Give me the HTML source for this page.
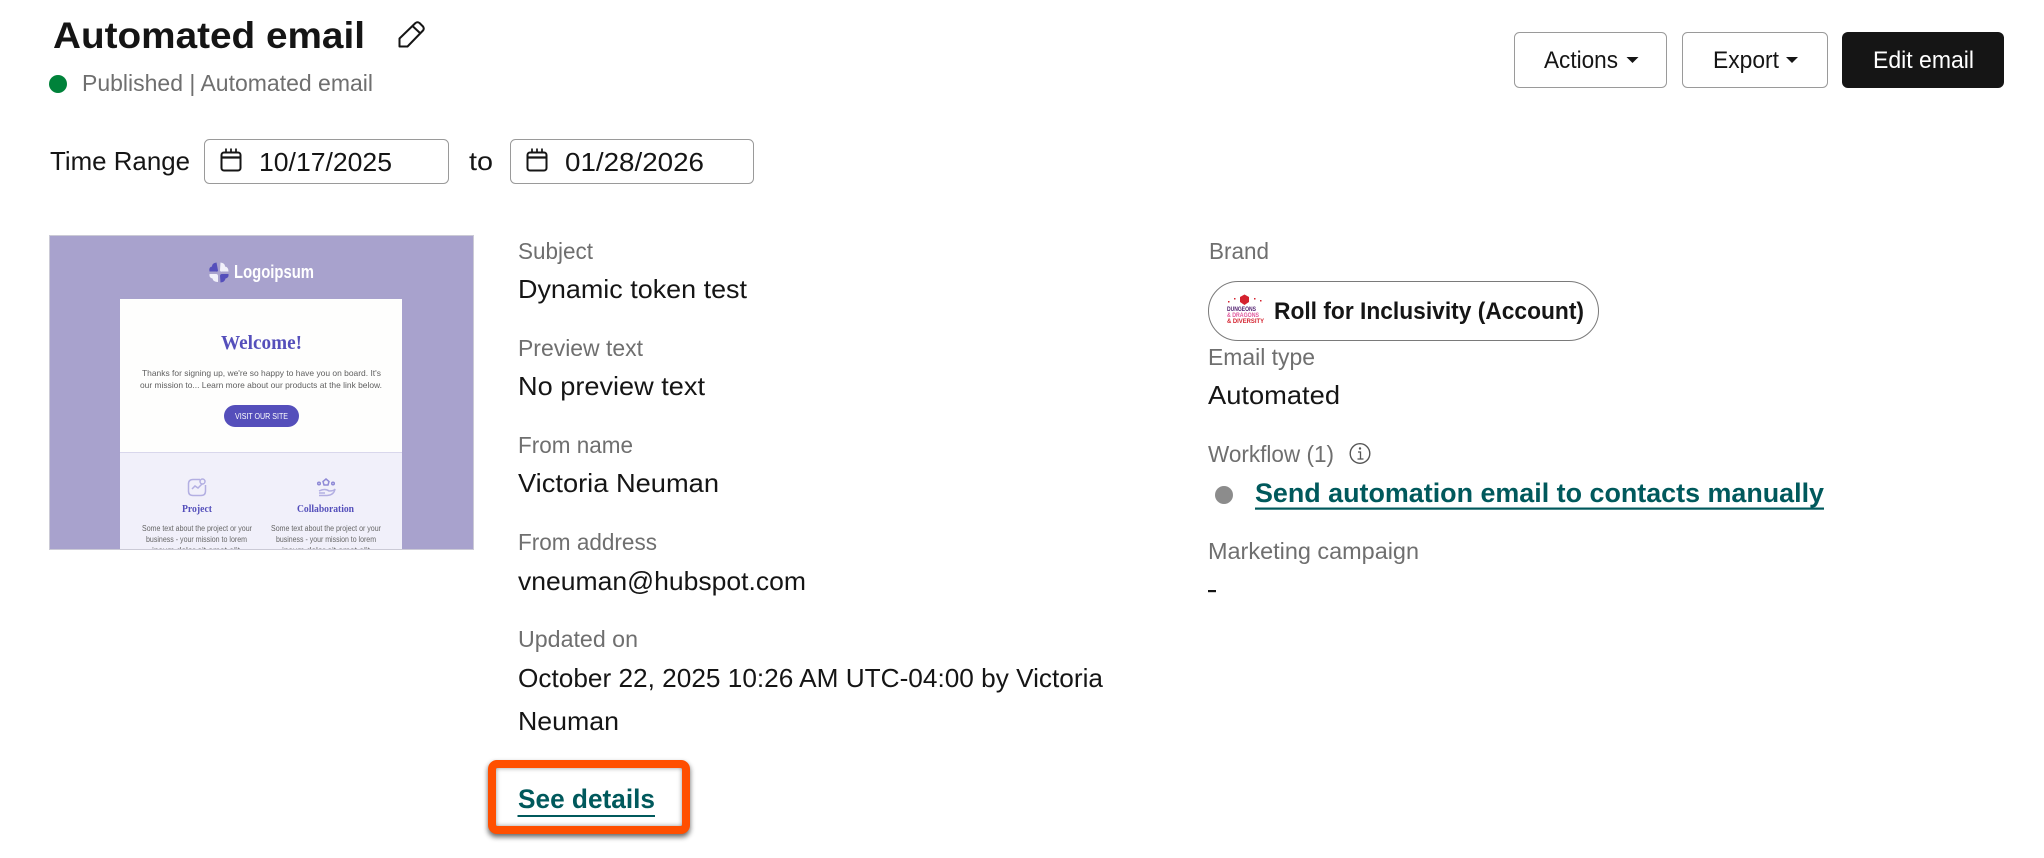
<!DOCTYPE html>
<html lang="en"><head><meta charset="utf-8"><title>Automated email</title>
<style>
html,body{margin:0;padding:0;background:#fff;width:2044px;height:858px;overflow:hidden}
svg{display:block}
text{font-family:"Liberation Sans",sans-serif}
.l{font-size:23px;fill:#6f6f6f}
.v{font-size:26px;fill:#151515}
.b{font-size:26px;fill:#151515}
.lnk{font-size:27px;font-weight:700;fill:#00595c}
</style></head><body>
<svg width="2044" height="858" viewBox="0 0 2044 858" xmlns="http://www.w3.org/2000/svg">
<defs>
<clipPath id="th"><rect x="49" y="235" width="425" height="315"/></clipPath>
<clipPath id="inner"><rect x="496" y="768" width="186" height="58"/></clipPath>
<filter id="sh" x="-20%" y="-30%" width="140%" height="170%"><feGaussianBlur stdDeviation="2.600"/></filter>
<filter id="soft" x="-5%" y="-5%" width="110%" height="110%"><feGaussianBlur stdDeviation=".35"/></filter>
</defs>
<rect width="2044" height="858" fill="#fff"/>

<text x="53" y="48" font-size="37" font-weight="700" fill="#151515" textLength="312" lengthAdjust="spacingAndGlyphs">Automated email</text>
<path d="M399.500 46.500V38.500L415.500 23Q417.500 21.500 419.500 23L423 26.500Q424.500 28.500 423 30.500L407.500 46.500ZM412.500 26L420.500 33.500" fill="none" stroke="#151515" stroke-width="2" stroke-linejoin="round"/>

<circle cx="58" cy="84" r="9" fill="#00823a"/>
<text x="82" y="91" class="l" textLength="291" lengthAdjust="spacingAndGlyphs">Published | Automated email</text>

<text x="50" y="170" class="b" textLength="140" lengthAdjust="spacingAndGlyphs">Time Range</text>
<rect x="204.500" y="139.500" width="244" height="44" rx="5" fill="#fff" stroke="#9a9a9a" stroke-width="1"/>
<g fill="none" stroke="#151515" stroke-width="2">
<rect x="221.500" y="152.500" width="19" height="18" rx="2.500"/><path d="M221.500 157.500H240.500" stroke-width="2.200"/><path d="M226 148.500V153.500M231 148.500V153.500M236 148.500V153.500" stroke-width="1.700"/>
</g>
<text x="259" y="171" class="v" textLength="133" lengthAdjust="spacingAndGlyphs">10/17/2025</text>
<text x="469" y="170" class="b" textLength="24" lengthAdjust="spacingAndGlyphs">to</text>
<rect x="510.500" y="139.500" width="243" height="44" rx="5" fill="#fff" stroke="#9a9a9a" stroke-width="1"/>
<g fill="none" stroke="#151515" stroke-width="2">
<rect x="527.500" y="152.500" width="19" height="18" rx="2.500"/><path d="M527.500 157.500H546.500" stroke-width="2.200"/><path d="M532 148.500V153.500M537 148.500V153.500M542 148.500V153.500" stroke-width="1.700"/>
</g>
<text x="565" y="171" class="v" textLength="139" lengthAdjust="spacingAndGlyphs">01/28/2026</text>

<rect x="1514.500" y="32.500" width="152" height="55" rx="5" fill="#fff" stroke="#9a9a9a" stroke-width="1"/>
<text x="1544" y="68" font-size="24" fill="#151515" textLength="74" lengthAdjust="spacingAndGlyphs">Actions</text>
<path d="M1626.500 57H1638.500L1632.500 63Z" fill="#151515"/>
<rect x="1682.500" y="32.500" width="145" height="55" rx="5" fill="#fff" stroke="#9a9a9a" stroke-width="1"/>
<text x="1713" y="68" font-size="24" fill="#151515" textLength="66" lengthAdjust="spacingAndGlyphs">Export</text>
<path d="M1786 57H1798L1792 63Z" fill="#151515"/>
<rect x="1842" y="32" width="162" height="56" rx="6" fill="#151515"/>
<text x="1873" y="68" font-size="24" fill="#fff" textLength="101" lengthAdjust="spacingAndGlyphs">Edit email</text>

<g clip-path="url(#th)">
<g filter="url(#soft)">
<rect x="49" y="235" width="425" height="315" fill="#a8a2cd"/>
<rect x="120" y="299" width="282" height="153" fill="#fefefd"/>
<rect x="120" y="452" width="282" height="100" fill="#f1f0fa"/>
<path d="M120 452.500H402" stroke="#d9d7ec" stroke-width="1"/>
<g>
<path d="M216.500 262.500L218 270.500Q218 272 216 271.500H209.500Q208.500 267 212 266.500Q212 263 216.500 262.500Z" fill="#5450bb"/>
<path d="M220.500 262.500Q225 263 225 266.500Q228.500 267 228.500 271.500H222Q220 272 220 270Z" fill="#f1f0fa"/>
<path d="M209.500 274H216Q218 274 218 276V282Q213 282 212.500 278.500Q209 278 209.500 274Z" fill="#f1f0fa"/>
<path d="M220 276Q220 274 222 274H228.500Q229 278 225.500 278.500Q225 282 220.500 282.500Z" fill="#5450bb"/>
</g>
<text x="234" y="278" font-size="18" font-weight="700" fill="#fff" textLength="80" lengthAdjust="spacingAndGlyphs">Logoipsum</text>
<text x="221" y="349" font-size="20" font-weight="700" style="font-family:'Liberation Serif',serif" fill="#5450bb" textLength="81" lengthAdjust="spacingAndGlyphs">Welcome!</text>
<text x="142" y="376" font-size="8.400" fill="#5f5f5f" textLength="239" lengthAdjust="spacingAndGlyphs">Thanks for signing up, we're so happy to have you on board. It's</text>
<text x="140" y="388" font-size="8.400" fill="#5f5f5f" textLength="242" lengthAdjust="spacingAndGlyphs">our mission to... Learn more about our products at the link below.</text>
<rect x="224" y="405" width="75" height="22" rx="11" fill="#5450bb"/>
<text x="235" y="419" font-size="8" fill="#fff" textLength="53" lengthAdjust="spacingAndGlyphs">VISIT OUR SITE</text>
<g fill="none" stroke="#b3afe2" stroke-width="1.500">
<path d="M200 479.500H193Q188.500 479.500 188.500 484V491Q188.500 495.500 193 495.500H201Q205.500 495.500 205.500 491V485"/><circle cx="202.500" cy="481.500" r="2.500"/><path d="M192 489L195 486L198 488L202 484"/>
<path d="M326 479L329 481.500L328 485H324L323 481.500Z" stroke="#8f8ad6"/><circle cx="319" cy="483.500" r="1.300" stroke="#8f8ad6"/><circle cx="333" cy="483.500" r="1.300" stroke="#8f8ad6"/><path d="M319 491Q325 488 329 491Q334 491 335 489Q334 495 327 495.500H319M319 493H325"/>
</g>
<text x="182" y="512" font-size="10.500" font-weight="700" style="font-family:'Liberation Serif',serif" fill="#5450bb" textLength="30" lengthAdjust="spacingAndGlyphs">Project</text>
<text x="297" y="512" font-size="10.500" font-weight="700" style="font-family:'Liberation Serif',serif" fill="#5450bb" textLength="57" lengthAdjust="spacingAndGlyphs">Collaboration</text>
<g font-size="7.800" fill="#666">
<text x="142" y="531" textLength="110" lengthAdjust="spacingAndGlyphs">Some text about the project or your</text>
<text x="146" y="542" textLength="101" lengthAdjust="spacingAndGlyphs">business - your mission to lorem</text>
<text x="152" y="553" textLength="88" lengthAdjust="spacingAndGlyphs">ipsum dolor sit amet elit</text>
<text x="271" y="531" textLength="110" lengthAdjust="spacingAndGlyphs">Some text about the project or your</text>
<text x="276" y="542" textLength="100" lengthAdjust="spacingAndGlyphs">business - your mission to lorem</text>
<text x="282" y="553" textLength="88" lengthAdjust="spacingAndGlyphs">ipsum dolor sit amet elit</text>
</g>
</g>
</g>
<rect x="49.500" y="235.500" width="424" height="314" fill="none" stroke="#cbcad6" stroke-width="1"/>

<text x="518" y="259" class="l" textLength="75" lengthAdjust="spacingAndGlyphs">Subject</text>
<text x="518" y="298" class="v" textLength="229" lengthAdjust="spacingAndGlyphs">Dynamic token test</text>
<text x="518" y="356" class="l" textLength="125" lengthAdjust="spacingAndGlyphs">Preview text</text>
<text x="518" y="395" class="v" textLength="187" lengthAdjust="spacingAndGlyphs">No preview text</text>
<text x="518" y="453" class="l" textLength="115" lengthAdjust="spacingAndGlyphs">From name</text>
<text x="518" y="492" class="v" textLength="201" lengthAdjust="spacingAndGlyphs">Victoria Neuman</text>
<text x="518" y="550" class="l" textLength="139" lengthAdjust="spacingAndGlyphs">From address</text>
<text x="518" y="590" class="v" textLength="288" lengthAdjust="spacingAndGlyphs">vneuman@hubspot.com</text>
<text x="518" y="647" class="l" textLength="120" lengthAdjust="spacingAndGlyphs">Updated on</text>
<text x="518" y="687" class="v" textLength="585" lengthAdjust="spacingAndGlyphs">October 22, 2025 10:26 AM UTC-04:00 by Victoria</text>
<text x="518" y="730" class="v" textLength="101" lengthAdjust="spacingAndGlyphs">Neuman</text>

<rect x="488" y="763" width="202" height="74" rx="8" fill="#000" opacity=".6" filter="url(#sh)"/>
<rect x="492" y="764" width="194" height="66" rx="5" fill="#fff" stroke="#ff4f00" stroke-width="8"/>
<g clip-path="url(#inner)"><rect x="493" y="765" width="192" height="64" fill="none" stroke="#000" stroke-opacity=".6" stroke-width="4" filter="url(#sh)"/></g>
<text x="518" y="808" class="lnk" textLength="137" lengthAdjust="spacingAndGlyphs">See details</text>
<rect x="517.500" y="815" width="137.500" height="2" fill="#00595c"/>

<text x="1209" y="259" class="l" textLength="60" lengthAdjust="spacingAndGlyphs">Brand</text>
<rect x="1208.500" y="281.500" width="390" height="59" rx="29.500" fill="#fff" stroke="#7a7a7a" stroke-width="1"/>
<g filter="url(#soft)">
<path d="M1244.500 294.500L1249 297V302L1244.500 305L1240 302V297Z" fill="#d4222f"/>
<g fill="#d4222f"><rect x="1228" y="301" width="1.500" height="1.500"/><rect x="1234" y="298" width="1.500" height="1.500"/><rect x="1254" y="298" width="1.500" height="1.500"/><rect x="1260" y="300" width="1.500" height="1.500"/></g>
<text x="1227" y="311" font-size="6.500" font-weight="700" fill="#4b1a6b" textLength="29" lengthAdjust="spacingAndGlyphs">DUNGEONS</text>
<text x="1227" y="317" font-size="6.500" font-weight="700" fill="#e0569c" textLength="32" lengthAdjust="spacingAndGlyphs">&amp; DRAGONS</text>
<text x="1227" y="323" font-size="6.500" font-weight="700" fill="#d4222f" textLength="37" lengthAdjust="spacingAndGlyphs">&amp; DIVERSITY</text>
</g>
<text x="1274" y="319" font-size="24" font-weight="700" fill="#151515" textLength="310" lengthAdjust="spacingAndGlyphs">Roll for Inclusivity (Account)</text>
<text x="1208" y="365" class="l" textLength="107" lengthAdjust="spacingAndGlyphs">Email type</text>
<text x="1208" y="404" class="v" textLength="132" lengthAdjust="spacingAndGlyphs">Automated</text>
<text x="1208" y="462" class="l" textLength="126" lengthAdjust="spacingAndGlyphs">Workflow (1)</text>
<circle cx="1360" cy="453.500" r="9.800" fill="none" stroke="#555" stroke-width="1.400"/>
<path d="M1358 452H1360.500V459M1357.500 459H1363.500" fill="none" stroke="#555" stroke-width="1.300"/><circle cx="1360" cy="448.500" r="1.200" fill="#555"/>
<circle cx="1224" cy="495" r="9" fill="#8c8c8c"/>
<text x="1255" y="502" class="lnk" textLength="569" lengthAdjust="spacingAndGlyphs">Send automation email to contacts manually</text>
<rect x="1255" y="507.500" width="569" height="2.200" fill="#00595c"/>
<text x="1208" y="559" class="l" textLength="211" lengthAdjust="spacingAndGlyphs">Marketing campaign</text>
<rect x="1208" y="590" width="8" height="2.200" fill="#151515"/>
</svg>
</body></html>
